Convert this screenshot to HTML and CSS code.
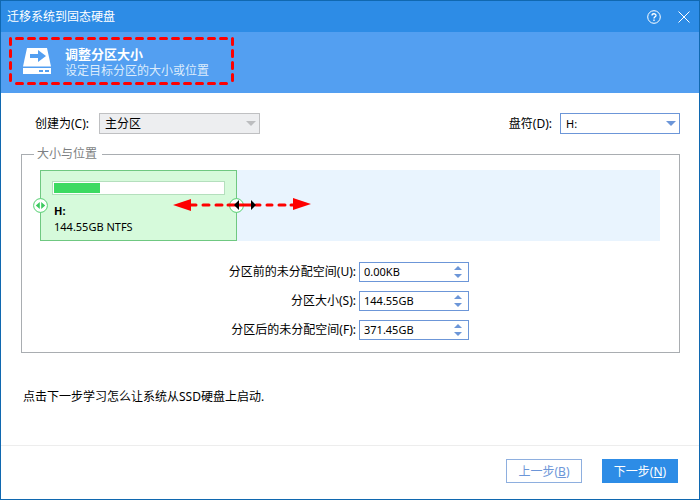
FILE: index.html
```
<!DOCTYPE html>
<html lang="zh-CN">
<head>
    <meta charset="UTF-8">
    <meta name="viewport" content="width=device-width, initial-scale=1.0">
    <title>迁移系统到固态硬盘</title>
    <link rel="stylesheet" href="styles.css">
</head>
<body>
    <div class="window">
        <div class="titlebar">
            <span class="title">迁移系统到固态硬盘</span>
            <button class="title-button" type="button" aria-label="帮助">
                <svg width="14" height="14" viewBox="0 0 14 14" fill="none" stroke="#fff">
                    <circle cx="7" cy="7" r="6.3"/>
                    <path d="M5 5.5C5 3.2 9 3.2 9 5.4C9 6.8 7 6.8 7 8.6" stroke-width="1.3"/>
                    <path d="M7 9.6V11" stroke-width="1.3"/>
                </svg>
            </button>
            <button class="title-button" type="button" aria-label="关闭">
                <svg width="12" height="12" viewBox="0 0 12 12" stroke="#fff">
                    <path d="M0.5 0.5L11.5 11.5M11.5 0.5L0.5 11.5"/>
                </svg>
            </button>
        </div>

        <div class="banner">
            <div class="highlight">
                <svg class="highlight-frame" width="225" height="49" fill="none" stroke="#fe0000" stroke-width="3" stroke-linecap="round">
                    <path d="M1.5 1.5H223.5M1.5 46.5H223.5" stroke-dasharray="6 6" stroke-dashoffset="6"/>
                    <path d="M1.5 1.5V46.5M223.5 1.5V46.5" stroke-dasharray="6 6"/>
                </svg>
                <svg width="28" height="27" viewBox="0 0 28 27">
                    <path d="M4 0H24L28 18.5H0Z" fill="#fff"/>
                    <path d="M0 20H28V26H0Z" fill="#fff"/>
                    <path d="M7 6H15V2L23 8L15 14V10H7Z" fill="#539ff1"/>
                    <path d="M16 22H20V24H16ZM22 22H26V24H22Z" fill="#539ff1"/>
                </svg>
                <div class="step">
                    <h1 class="step-title">调整分区大小</h1>
                    <p class="step-note">设定目标分区的大小或位置</p>
                </div>
            </div>
        </div>

        <div class="content">
            <div class="options">
                <label for="createAs">创建为(C):</label>
                <div class="select select-disabled">
                    <select id="createAs" disabled>
                        <option>主分区</option>
                    </select>
                </div>
                <label class="letter-label" for="driveLetter">盘符(D):</label>
                <div class="select select-letter">
                    <select id="driveLetter">
                        <option>H:</option>
                    </select>
                </div>
            </div>

            <fieldset class="group">
                <legend>大小与位置</legend>
                <div class="disk">
                    <div class="partition">
                        <div class="usage"><div class="usage-fill"></div></div>
                        <p class="partition-name">H:</p>
                        <p class="partition-size">144.55GB NTFS</p>
                        <svg class="handle handle-left" width="15" height="15" viewBox="0 0 15 15">
                            <circle cx="7.5" cy="7.5" r="6.9" fill="#fff" stroke="#51cf6e"/>
                            <path d="M6.8 4V11L2.8 7.5ZM8.2 4V11L12.2 7.5Z" fill="#3cc95f"/>
                        </svg>
                        <svg class="handle handle-right" width="15" height="15" viewBox="0 0 15 15">
                            <circle cx="7.5" cy="7.5" r="6.9" fill="#fff" stroke="#51cf6e"/>
                        </svg>
                        <svg class="drag-arrows" width="138" height="13" viewBox="0 0 138 13">
                            <path d="M17 7H23M30 7H36M43 7H49M55 7H78M83 7H87M94 7H99M106 7H112M118 7H121" stroke="#fe0000" stroke-width="3" stroke-linecap="round"/>
                            <path d="M0 7L18 1V13ZM138 6L120 0V12Z" fill="#fe0000"/>
                            <path d="M66 2V12L61 7ZM78 2V12L83 7Z" fill="#000"/>
                            <path d="M66.5 2V5M66.5 9V12M77.5 2V5M77.5 9V12" stroke="#fff"/>
                        </svg>
                    </div>
                </div>

                <div class="sizes">
                    <label for="spaceBefore">分区前的未分配空间(U):</label>
                    <div class="spinner">
                        <input id="spaceBefore" type="text" value="0.00KB">
                        <div class="spinner-buttons">
                            <button type="button" class="up" aria-label="增加"></button>
                            <button type="button" class="down" aria-label="减少"></button>
                        </div>
                    </div>
                    <label for="partitionSize">分区大小(S):</label>
                    <div class="spinner">
                        <input id="partitionSize" type="text" value="144.55GB">
                        <div class="spinner-buttons">
                            <button type="button" class="up" aria-label="增加"></button>
                            <button type="button" class="down" aria-label="减少"></button>
                        </div>
                    </div>
                    <label for="spaceAfter">分区后的未分配空间(F):</label>
                    <div class="spinner">
                        <input id="spaceAfter" type="text" value="371.45GB">
                        <div class="spinner-buttons">
                            <button type="button" class="up" aria-label="增加"></button>
                            <button type="button" class="down" aria-label="减少"></button>
                        </div>
                    </div>
                </div>
            </fieldset>

            <p class="hint">点击下一步学习怎么让系统从SSD硬盘上启动.</p>
        </div>

        <div class="footer">
            <button class="button" type="button">上一步(<u>B</u>)</button>
            <button class="button button-primary" type="button">下一步(<u>N</u>)</button>
        </div>
    </div>
</body>
</html>
```

FILE: styles.css
```
* {
    box-sizing: border-box;
}
body {
    margin: 0;
    font-family: "Noto Sans", "Noto Sans CJK SC", sans-serif;
    font-size: 12px;
    line-height: 16px;
    color: #000;
}
h1, p {
    margin: 0;
}
button, input, select {
    font-family: inherit;
    font-size: inherit;
    color: inherit;
}
.window {
    display: flex;
    flex-direction: column;
    min-height: 100vh;
    border: 1px solid #1068b0;
    background-color: #fff;
}

/* Title bar and step banner */
.titlebar {
    display: flex;
    align-items: center;
    height: 31px;
    padding: 0 0 0 6px;
    background-color: #2d8ce6;
    color: #fff;
}
.title {
    flex: 1;
}
.title-button {
    display: flex;
    align-items: center;
    justify-content: center;
    width: 30px;
    height: 30px;
    padding: 0;
    border: none;
    background: none;
    cursor: pointer;
}
.banner {
    padding: 5px 8px 7px;
    background-color: #539ff1;
    color: #fff;
}
.highlight {
    position: relative;
    display: flex;
    align-items: center;
    gap: 14px;
    width: 225px;
    height: 49px;
    padding-left: 14px;
}
.highlight-frame {
    position: absolute;
    top: 0;
    left: 0;
}
.step {
    padding-top: 2px;
}
.step-title {
    font-size: 13px;
    line-height: 17px;
}
.step-note {
    color: #dcecfc;
}

/* Options */
.content {
    flex: 1;
    padding: 20px 19px 0 20px;
}
.options {
    display: flex;
    align-items: center;
    padding-left: 14px;
}
.select {
    position: relative;
    width: 161px;
    height: 21px;
    margin-left: 10px;
}
.select select {
    appearance: none;
    width: 100%;
    height: 100%;
    padding: 0 20px 0 5px;
    border: 1px solid #6c96d8;
    border-radius: 0;
    background-color: #fff;
    opacity: 1;
}
.select::after {
    content: "";
    position: absolute;
    top: 8px;
    right: 4px;
    border: 5px solid transparent;
    border-top-color: #6c96d8;
    border-bottom: none;
    pointer-events: none;
}
.select-disabled select {
    border-color: #bfc0c2;
    background-color: #edeef0;
    color: #000;
}
.select-disabled::after {
    border-top-color: #bcbdbf;
}
.select-letter {
    width: 120px;
    margin-left: 8px;
}
.select-letter select {
    font-size: 11px;
}
.letter-label {
    margin-left: auto;
}

/* Size and position */
.group {
    min-width: 0;
    margin: 12px 0 0;
    padding: 8px 19px 12px 18px;
    border: 1px solid #a9adb1;
}
.group legend {
    margin-left: -6px;
    padding: 0 5px 0 3px;
    color: #7d7f82;
}
.disk {
    height: 71px;
    background-color: #e9f4fe;
}
.partition {
    position: relative;
    width: calc(32% - 1px);
    height: 71px;
    padding: 10px 11px 0 11px;
    border: 1px solid #6fc881;
    background-color: #d6fadb;
}
.usage {
    height: 14px;
    margin-bottom: 8px;
    padding: 1px;
    border: 1px solid #b4dfbd;
    background-color: #fff;
}
.usage-fill {
    width: 27%;
    height: 10px;
    background-color: #3dda62;
}
.partition-name, .partition-size {
    padding-left: 2px;
    font-size: 11px;
}
.partition-name {
    font-weight: bold;
}
.handle {
    position: absolute;
    top: 27px;
}
.handle-left {
    left: -8px;
}
.handle-right {
    right: -8px;
}
.drag-arrows {
    position: absolute;
    top: 27px;
    right: -75px;
}
.sizes {
    display: grid;
    grid-template-columns: 316px 110px;
    align-items: center;
    gap: 9px 3px;
    margin-top: 21px;
}
.sizes label {
    text-align: right;
}
.spinner {
    display: flex;
    height: 20px;
    border: 1px solid #6c96d8;
    background-color: #fff;
}
.spinner input {
    flex: 1;
    min-width: 0;
    padding: 0 4px 2px;
    border: none;
    outline: none;
    background: none;
    font-size: 11px;
}
.spinner-buttons {
    display: flex;
    flex-direction: column;
    justify-content: center;
    gap: 4px;
    padding-right: 6px;
}
.spinner-buttons button {
    width: 0;
    height: 0;
    padding: 0;
    border: 4px solid transparent;
    background: none;
    cursor: pointer;
}
.spinner-buttons .up {
    border-top: none;
    border-bottom-color: #6c96d8;
}
.spinner-buttons .down {
    border-bottom: none;
    border-top-color: #6c96d8;
}
.hint {
    margin-top: 36px;
    padding-left: 2px;
}

/* Footer */
.footer {
    display: flex;
    justify-content: flex-end;
    gap: 20px;
    padding: 13px 21px 16px;
    border-top: 1px solid #ededed;
}
.button {
    width: 76px;
    height: 24px;
    padding: 0;
    border: 1px solid #8eafdf;
    background-color: #fff;
    color: #6c96d8;
    cursor: pointer;
}
.button-primary {
    border-color: #2d8ce6;
    background-color: #2d8ce6;
    color: #fff;
}
```
